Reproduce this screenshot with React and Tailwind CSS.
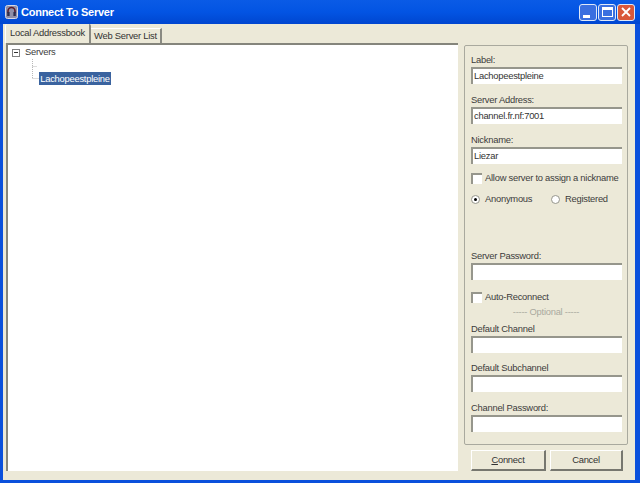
const ui = { fontFamily: '"Liberation Sans", Arial, sans-serif' }

function Field({ label, value, top }) {
  return (
    <div className={top}>
      <div className="h-[13px] pl-[6px] text-[9.4px] leading-[13px] whitespace-nowrap text-[#3c3c3c]">{label}</div>
      <div className="mt-[1px] ml-[6px] h-[17px] w-[151px] border-t-2 border-l-2 border-t-[#96968c] border-l-[#96968c] bg-white pl-[1px] text-[9.4px] leading-[14px] whitespace-nowrap text-[#333]">
        {value}
      </div>
    </div>
  )
}

function Check({ label, top }) {
  return (
    <div className={`flex h-[13px] items-center pl-[6px] ${top}`}>
      <div className="h-[11px] w-[11px] shrink-0 border-t-2 border-l-2 border-t-[#96968c] border-l-[#96968c] bg-white" />
      <span className="ml-[3px] text-[9.4px] whitespace-nowrap text-[#3c3c3c]">{label}</span>
    </div>
  )
}

function Radio({ label, checked, className }) {
  return (
    <div className={`flex items-center ${className}`}>
      <div className="flex h-[9px] w-[9px] items-center justify-center rounded-full border border-[#96968c] bg-white">
        {checked && <div className="h-[3px] w-[3px] rounded-full bg-black" />}
      </div>
      <span className="ml-[5px] text-[9.4px] whitespace-nowrap text-[#3c3c3c]">{label}</span>
    </div>
  )
}

function TitleButton({ className, children }) {
  return (
    <div className={`flex h-[17px] w-[18px] items-center justify-center rounded-[3px] border border-[#dfe8f8] ${className}`}>
      {children}
    </div>
  )
}

function Button({ children, className }) {
  return (
    <div className={`flex h-[21px] items-center justify-center border-r-2 border-b-2 border-r-[#77776f] border-b-[#77776f] border-t border-l border-t-white border-l-white bg-[#ece9d8] text-[9.4px] text-[#333] ${className}`}>
      {children}
    </div>
  )
}

export default function App() {
  return (
    <div style={ui} className="flex h-[483px] w-[640px] flex-col overflow-hidden bg-[#0a50dc] tracking-[-0.25px]">
      <div className="flex h-[24px] shrink-0 items-center bg-gradient-to-b from-[#0a5be6] via-[#0354e3] to-[#0046d0] pr-[5px] pl-[5px]">
        <svg width="13" height="14" viewBox="0 0 13 14">
          <rect x="0.5" y="0.5" width="12" height="13" rx="2" fill="#8f8fa8" stroke="#d8d8e4" />
          <path d="M3 8V6a3.5 3.5 0 0 1 7 0v2" fill="none" stroke="#5a1c2c" strokeWidth="1.6" />
          <rect x="2.2" y="7" width="2.4" height="4" fill="#2e2e4e" />
          <rect x="8.4" y="7" width="2.4" height="4" fill="#2e2e4e" />
        </svg>
        <span className="ml-[3px] text-[11px] font-bold whitespace-nowrap text-white">Connect To Server</span>
        <div className="ml-auto flex gap-[1px]">
          <TitleButton className="bg-[#3a6fe0]">
            <div className="mt-[9px] mr-[4px] h-[3px] w-[7px] bg-white" />
          </TitleButton>
          <TitleButton className="bg-[#3a6fe0]">
            <div className="h-[10px] w-[11px] border border-t-[3px] border-white" />
          </TitleButton>
          <TitleButton className="bg-[#d9583a]">
            <svg width="10" height="10" viewBox="0 0 10 10">
              <path d="M1 1l8 8M9 1l-8 8" stroke="#fff" strokeWidth="1.8" />
            </svg>
          </TitleButton>
        </div>
      </div>

      <div className="mr-[5px] mb-[3px] ml-[3px] flex min-h-0 flex-1 flex-col bg-[#ece9d8]">
        <div className="flex h-[19px] shrink-0 items-end pl-[2px]">
          <div className="flex h-[19px] w-[86px] items-center justify-center rounded-t-[2px] border-r-2 border-l border-r-[#8a8a82] border-l-white bg-[#ece9d8] text-[9.4px] whitespace-nowrap text-[#333]">
            Local Addressbook
          </div>
          <div className="flex h-[15px] w-[71px] items-center justify-center border-t border-r-2 border-t-white border-r-[#8a8a82] text-[9.4px] whitespace-nowrap text-[#333]">
            Web Server List
          </div>
        </div>

        <div className="flex min-h-0 flex-1 pr-[7px] pb-[9px] pl-[3px]">
          <div className="w-[452px] border-t-2 border-l-2 border-t-[#85857c] border-l-[#85857c] bg-white pt-[1px] pl-[4px]">
            <div className="flex h-[13px] items-center">
              <div className="flex h-[8px] w-[8px] items-center justify-center border border-[#808080] bg-white">
                <div className="h-[1px] w-[4px] bg-[#333]" />
              </div>
              <span className="ml-[5px] text-[9.4px] text-[#3c3c3c]">Servers</span>
            </div>
            <div className="ml-[20px] flex">
              <svg width="7" height="22" viewBox="0 0 7 22" className="shrink-0">
                <path d="M0.5 0V20M0.5 7.5H5M0.5 19.5H7" stroke="#b8b8b8" strokeDasharray="1 1" fill="none" />
              </svg>
              <div className="mt-[13px] h-[13px] w-[72px] bg-[#3a639f] text-center text-[9.4px] leading-[13px] whitespace-nowrap text-white">
                Lachopeestpleine
              </div>
            </div>
          </div>

          <div className="mt-[2px] ml-[6px] flex w-[164px] flex-col">
            <div className="h-[401px] rounded-[2px] border border-[#a9a99e] pt-[7px]">
              <Field label="Label:" value="Lachopeestpleine" />
              <Field label="Server Address:" value="channel.fr.nf:7001" top="mt-[9px]" />
              <Field label="Nickname:" value="Liezar" top="mt-[9px]" />
              <Check label="Allow server to assign a nickname" top="mt-[8px]" />
              <div className="mt-[8px] flex h-[13px] pl-[6px]">
                <Radio label="Anonymous" checked className="w-[80px]" />
                <Radio label="Registered" />
              </div>
              <Field label="Server Password:" top="mt-[43px]" />
              <Check label="Auto-Reconnect" top="mt-[11px]" />
              <div className="mt-[1px] h-[13px] text-center text-[9.4px] leading-[13px] text-[#aaa99f]">----- Optional -----</div>
              <Field label="Default Channel" top="mt-[4px]" />
              <Field label="Default Subchannel" top="mt-[8px]" />
              <Field label="Channel Password:" top="mt-[9px]" />
            </div>
            <div className="mt-[5px] flex gap-[4px] pl-[7px]">
              <Button className="w-[75px]"><span><u>C</u>onnect</span></Button>
              <Button className="w-[73px]">Cancel</Button>
            </div>
          </div>
        </div>
      </div>
    </div>
  )
}
